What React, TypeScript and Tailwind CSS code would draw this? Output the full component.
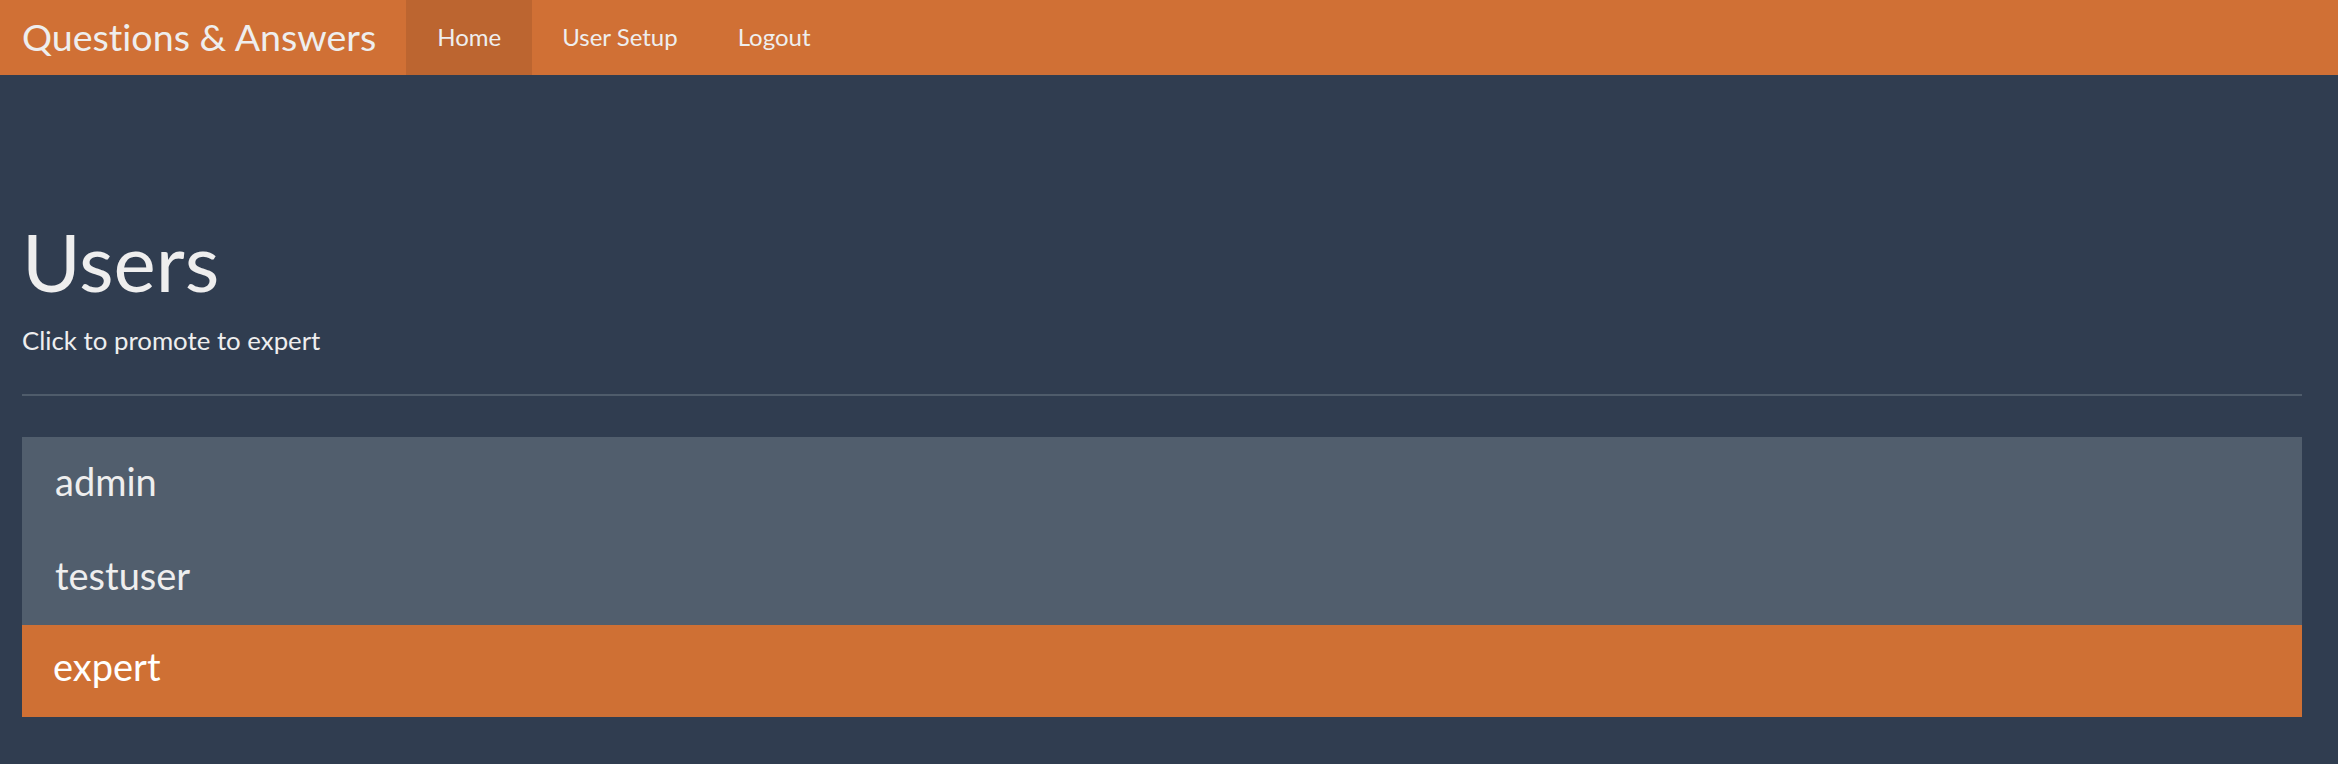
import React from 'react'

const users = [
  { name: 'admin', expert: false },
  { name: 'testuser', expert: false },
  { name: 'expert', expert: true },
]

export default function App() {
  return (
    <div
      className="min-h-[764px] bg-[#303d50] text-[#ededed] [font-variant-ligatures:none]"
      style={{ fontFamily: 'Lato, "Open Sans", sans-serif' }}
    >
      {/* ── Navbar ─────────────────────────────────────────────── */}
      <nav className="flex h-[75px] items-stretch bg-[#d07035]">
        <a href="#" className="flex items-center pl-[22px] pr-[30px] pb-[2px] text-[37.6px] leading-none text-[#eeeeee]">
          Questions &amp; Answers
        </a>
        <a href="#" className="flex items-center bg-[#bc6530] px-[31px] pb-[2px] text-[24px] leading-none text-[#eeeeee]">
          Home
        </a>
        <a href="#" className="flex items-center px-[30px] pb-[2px] text-[24px] leading-none text-[#eeeeee]">
          User Setup
        </a>
        <a href="#" className="flex items-center px-[30px] pb-[2px] text-[24px] leading-none text-[#eeeeee]">
          Logout
        </a>
      </nav>

      {/* ── Content ────────────────────────────────────────────── */}
      <main className="pl-[22px] pr-[36px] pt-[146px]">
        <h1 className="text-[80px] leading-none font-normal text-[#eeeeee]">Users</h1>
        <p className="mt-[27px] text-[25.8px] leading-none text-[#eeeeee]">Click to promote to expert</p>

        <hr className="mt-[40px] border-0 h-[2px] bg-[#4f5c6b]" />

        <ul className="mt-[41px]">
          {users.map((u) =>
            u.expert ? (
              <li
                key={u.name}
                className="h-[92px] bg-[#cf7034] pl-[31px] pt-[22px] text-[38px] leading-none text-white"
              >
                {u.name}
              </li>
            ) : (
              <li
                key={u.name}
                className="h-[94px] bg-[#515e6d] pl-[33px] pt-[25px] text-[38px] leading-none text-[#eeeeee]"
              >
                {u.name}
              </li>
            )
          )}
        </ul>
      </main>
    </div>
  )
}
